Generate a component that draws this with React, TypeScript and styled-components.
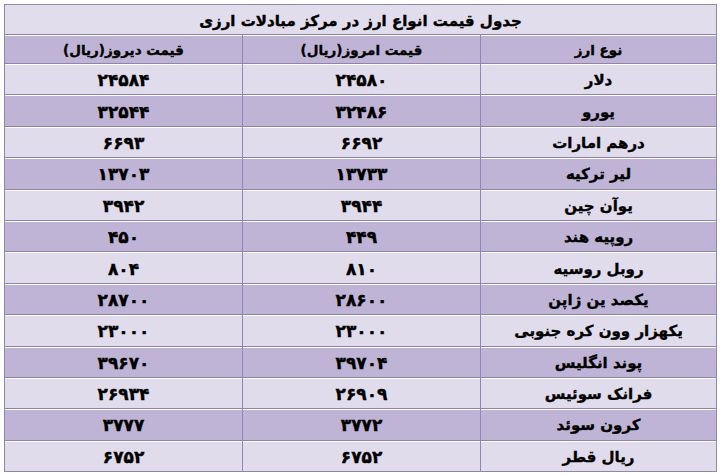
import React from "react";
import styled, { createGlobalStyle } from "styled-components";

const GlobalStyle = createGlobalStyle`
  html, body {
    margin: 0;
    padding: 0;
    background: #ffffff;
  }
  body {
    font-family: "DejaVu Sans", "Noto Sans", sans-serif;
  }
`;

type Rate = {
  name: string;
  today: string;
  yesterday: string;
};

const rates: Rate[] = [
  { name: "دلار", today: "۲۴۵۸۰", yesterday: "۲۴۵۸۴" },
  { name: "یورو", today: "۳۲۴۸۶", yesterday: "۳۲۵۴۴" },
  { name: "درهم امارات", today: "۶۶۹۲", yesterday: "۶۶۹۳" },
  { name: "لیر ترکیه", today: "۱۳۷۳۳", yesterday: "۱۳۷۰۳" },
  { name: "یوآن چین", today: "۳۹۴۴", yesterday: "۳۹۴۲" },
  { name: "روپیه هند", today: "۴۴۹", yesterday: "۴۵۰" },
  { name: "روبل روسیه", today: "۸۱۰", yesterday: "۸۰۴" },
  { name: "یکصد ین ژاپن", today: "۲۸۶۰۰", yesterday: "۲۸۷۰۰" },
  { name: "یکهزار وون کره جنوبی", today: "۲۳۰۰۰", yesterday: "۲۳۰۰۰" },
  { name: "پوند انگلیس", today: "۳۹۷۰۴", yesterday: "۳۹۶۷۰" },
  { name: "فرانک سوئیس", today: "۲۶۹۰۹", yesterday: "۲۶۹۳۴" },
  { name: "کرون سوئد", today: "۳۷۷۲", yesterday: "۳۷۷۷" },
  { name: "ریال قطر", today: "۶۷۵۲", yesterday: "۶۷۵۲" },
];

export default function App(): React.JSX.Element {
  return (
    <>
      <GlobalStyle />
      <Page>
        <Table dir="rtl">
          <TitleRow>جدول قیمت انواع ارز در مرکز مبادلات ارزی</TitleRow>
          <Row $dark $height={29}>
            <Cell $kind="head">نوع ارز</Cell>
            <Cell $kind="head">قیمت امروز(ریال)</Cell>
            <Cell $kind="head">قیمت دیروز(ریال)</Cell>
          </Row>
          {rates.map((r, i) => (
            <Row key={r.name} $dark={i % 2 === 1} $height={31.4}>
              <Cell $kind="name">{r.name}</Cell>
              <Cell $kind="num">{r.today}</Cell>
              <Cell $kind="num">{r.yesterday}</Cell>
            </Row>
          ))}
        </Table>
      </Page>
    </>
  );
}

const Page = styled.div`
  padding: 4px 0 0 4px;
`;

const Table = styled.div`
  display: flex;
  flex-direction: column;
  width: 713px;
  border: 1px solid #8f87a4;
  box-sizing: border-box;
  color: #000;
  font-weight: 700;
`;

const TitleRow = styled.div`
  height: 29px;
  display: flex;
  align-items: center;
  justify-content: center;
  padding-top: 2px;
  box-sizing: border-box;
  background: #e2ddec;
  font-size: 15px;
  -webkit-text-stroke: 0.4px #000;
`;

const Row = styled.div<{ $dark?: boolean; $height: number }>`
  display: grid;
  grid-template-columns: 236px 238px 1fr;
  height: ${(p) => p.$height}px;
  box-sizing: border-box;
  border-top: 1px solid #8d85a8;
  box-shadow: inset 0 1px 0 #ffffff;
  background: ${(p) => (p.$dark ? "#bfb4d5" : "#e1dcec")};
`;

const sizes = { head: 13.5, name: 15, num: 17 };

const Cell = styled.div<{ $kind: "head" | "name" | "num" }>`
  display: flex;
  align-items: center;
  justify-content: center;
  padding-top: 2px;
  font-size: ${(p) => sizes[p.$kind]}px;
  -webkit-text-stroke: ${(p) => (p.$kind === "num" ? "0.4px" : "0.35px")} #000;
  border-left: 1px solid #9088b4;

  &:last-child {
    border-left: none;
  }
`;
